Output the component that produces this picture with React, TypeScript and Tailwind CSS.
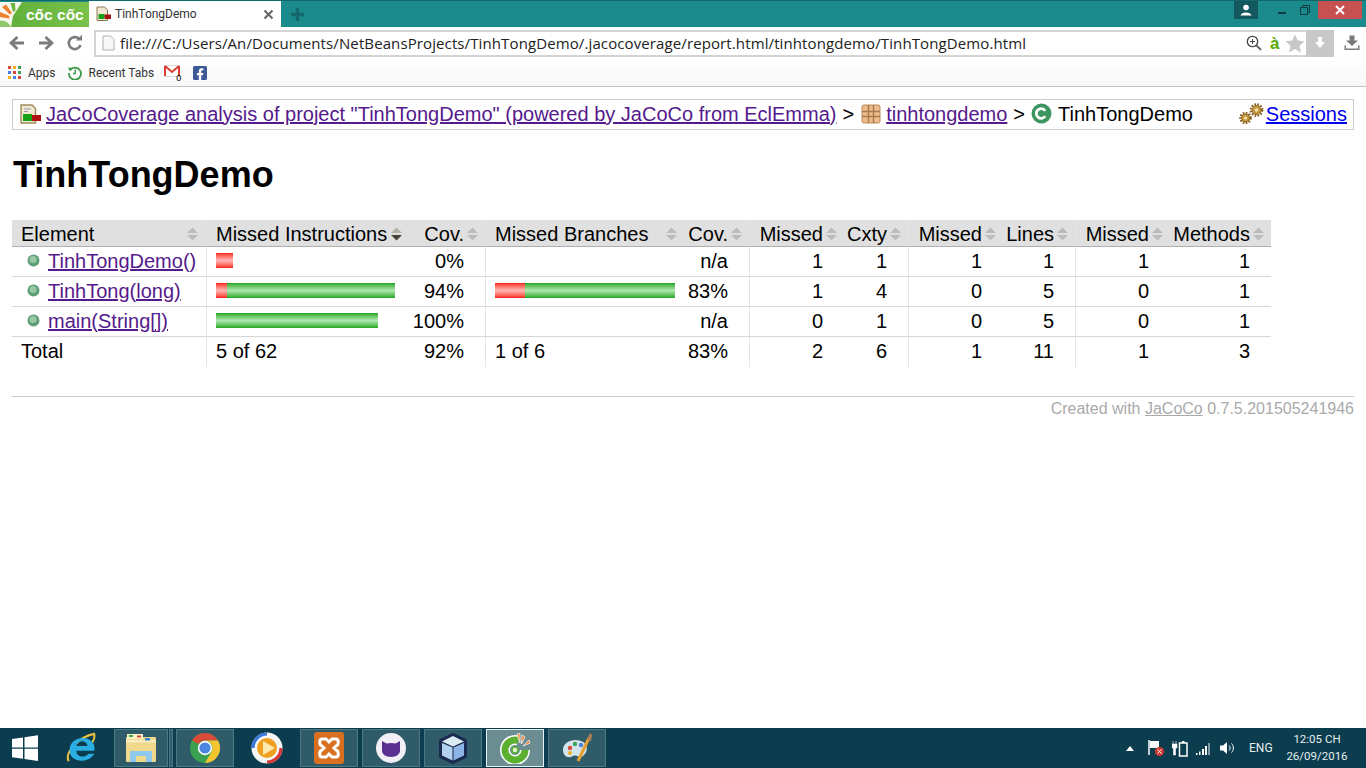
import React from 'react';
import { FaFacebookSquare } from 'react-icons/fa';

const SortIcon = ({ active }: { active?: boolean }) => (
  <svg width="11" height="14" viewBox="0 0 11 14" className="shrink-0">
    <path d="M5.5 0.5 L11 6 H0 Z" fill={active ? '#b5b0a8' : '#bcbcbc'} />
    <path d="M0 8 H11 L5.5 13.5 Z" fill={active ? '#4a4238' : '#bcbcbc'} />
  </svg>
);

const RedBar = ({ w }: { w: number }) => (
  <span className="inline-block h-[15px] bg-linear-to-b from-[#f41c1c] via-[#ffb4b4] to-[#f41414]" style={{ width: w }} />
);

const GreenBar = ({ w }: { w: number }) => (
  <span className="inline-block h-[15px] bg-linear-to-b from-[#18a818] via-[#aee8ae] to-[#18a818]" style={{ width: w }} />
);

const MethodDot = () => (
  <svg width="13" height="13" viewBox="0 0 13 13" className="shrink-0">
    <circle cx="6.5" cy="6.5" r="6" fill="#5f9f78" />
    <circle cx="6" cy="5.5" r="3.5" fill="#98c8a4" />
  </svg>
);

const ReportIcon = () => (
  <svg width="21" height="20" viewBox="0 0 21 20" className="shrink-0">
    <path d="M1 1 H12 L15.5 4.5 V19 H1 Z" fill="#f0e8d0" stroke="#a08a5c" strokeWidth="1.4" />
    <path d="M4 5 H11 M4 7.5 H8" stroke="#9c9cb8" />
    <rect x="3" y="10" width="9" height="7" fill="#18a018" />
    <rect x="12" y="11" width="9" height="6" fill="#b01010" />
  </svg>
);

const PackageIcon = () => (
  <svg width="20" height="20" viewBox="0 0 20 20" className="shrink-0">
    <rect x="1" y="1" width="18" height="18" rx="2" fill="#eebc8a" stroke="#b8885c" />
    <path d="M7.5 1 V19 M12.5 1 V19 M1 7.5 H19 M1 12.5 H19" stroke="#a87850" strokeWidth="1.4" />
  </svg>
);

const ClassIcon = () => (
  <svg width="21" height="21" viewBox="0 0 20 20" className="shrink-0">
    <circle cx="10" cy="10" r="9.5" fill="#3f9560" />
    <path d="M13.5 7.5 A4.6 4.6 0 1 0 13.5 12.5" fill="none" stroke="#fff" strokeWidth="2.6" />
  </svg>
);

const Gear = ({ x, y, r }: { x: number; y: number; r: number }) => (
  <g>
    <circle cx={x} cy={y} r={r} fill="none" stroke="#8c6020" strokeWidth={r * 0.5} strokeDasharray="1.6 1.3" />
    <circle cx={x} cy={y} r={r * 0.8} fill="#c89a40" stroke="#7e5818" strokeWidth="0.8" />
    <circle cx={x} cy={y} r={r * 0.32} fill="#f0e0b0" />
  </g>
);

const SessionsIcon = () => (
  <svg width="25" height="22" viewBox="0 0 25 22" className="shrink-0 mr-[2px]">
    <Gear x={6.5} y={15} r={5} />
    <Gear x={17.5} y={7} r={5.5} />
  </svg>
);

const AppsIcon = () => {
  const colors = ['#d84a38', '#f0b020', '#3aa655', '#4a80d8', '#d84a38', '#3aa655', '#f0b020', '#4a80d8', '#d84a38'];
  return (
    <div className="grid grid-cols-3 gap-[2px] w-[13px] shrink-0">
      {colors.map((c, i) => (
        <span key={i} className="block w-[3px] h-[3px]" style={{ backgroundColor: c }} />
      ))}
    </div>
  );
};

const TabDocIcon = () => (
  <svg width="16" height="16" viewBox="0 0 16 16" className="shrink-0">
    <path d="M1 1 H8.5 L11.5 4 V14.5 H1 Z" fill="#f0e8d0" stroke="#8c7450" />
    <rect x="2.5" y="8" width="6" height="5" fill="#18a018" />
    <rect x="8.5" y="8.5" width="6.5" height="4.5" fill="#a01010" />
  </svg>
);

const CocCocMark = () => (
  <svg width="24" height="25" viewBox="0 0 24 25" className="shrink-0">
    <path d="M0 0 H22 L13 14 L11 25 H0 Z" fill="#f8f8ee" />
    <path d="M0 25 V19 C5 18 9 21 11 25 Z" fill="#8fca6a" />
    <path d="M0 15 L9 16.5 L9.5 14 L0 10 Z" fill="#ee7f2d" />
    <path d="M2 5 L10 12.5 L12 11 L6 2.5 Z" fill="#ee7f2d" />
    <path d="M10.5 1 L13 10 L15.5 8.5 L15 1 Z" fill="#6cb33f" />
  </svg>
);

const Arrow = ({ dir }: { dir: 'left' | 'right' }) => (
  <svg width="18" height="18" viewBox="0 0 18 18" className={dir === 'right' ? 'rotate-180' : ''}>
    <path d="M16 9 H4 M9.5 3 L3 9 L9.5 15" fill="none" stroke="#7c7c7c" strokeWidth="2.8" />
  </svg>
);

const ChromeIcon = () => (
  <svg width="30" height="30" viewBox="0 0 30 30">
    <circle cx="15" cy="15" r="15" fill="#3ba150" />
    <path d="M15 0 A15 15 0 0 1 28 7.5 L15 7.5 A7.5 7.5 0 0 0 8.5 11 L2 7.5 A15 15 0 0 1 15 0 Z" fill="#d94a38" />
    <path d="M28 7.5 A15 15 0 0 1 15 30 L21.5 18.7 A7.5 7.5 0 0 0 15 7.5 Z" fill="#f4c430" />
    <circle cx="15" cy="15" r="7.2" fill="#fff" />
    <circle cx="15" cy="15" r="5.6" fill="#4a86e0" />
  </svg>
);

const IEIcon = () => (
  <svg width="32" height="32" viewBox="0 0 32 34">
    <path d="M3 31 C-2 22 14 5 30 2 C31 6 30 8 28 11" fill="none" stroke="#e8c040" strokeWidth="2.2" />
    <path d="M27 20 H11 C11 27 20 28 24 23 H30 C25 33 5 34 4 20 C3 8 18 3 26 9 C30 12 31 16 30 20 Z M11 15 H23 C22 8 12 8 11 15 Z" fill="#2aaee4" fillRule="evenodd" />
  </svg>
);

const ExplorerIcon = () => (
  <svg width="32" height="30" viewBox="0 0 32 30">
    <rect x="1" y="4" width="30" height="25" rx="1" fill="#f0d88c" />
    <rect x="2" y="1" width="16" height="5" fill="#fbf0c4" />
    <rect x="4" y="2" width="4" height="2" fill="#3aa655" />
    <rect x="12" y="2.5" width="4" height="2" fill="#d84a38" />
    <rect x="1" y="7" width="30" height="2.5" fill="#f8ecc0" />
    <rect x="20" y="5" width="5" height="2.5" fill="#3a86c8" />
    <path d="M5 29 V18 H27 V29 H21 V23 H11 V29 Z" fill="#8fcaee" />
  </svg>
);

const MediaIcon = () => (
  <svg width="32" height="32" viewBox="0 0 32 32">
    <circle cx="16" cy="16" r="15.5" fill="#f6f6f6" />
    <path d="M2 16 A14 14 0 0 1 16 2" fill="none" stroke="#3a78d8" strokeWidth="3.2" />
    <path d="M16 30 A14 14 0 0 0 30 16" fill="none" stroke="#d83838" strokeWidth="3.2" />
    <circle cx="16" cy="16" r="10" fill="#f0a020" />
    <path d="M12 9 L24 16 L12 23 Z" fill="#fde8b0" />
  </svg>
);

const XamppIcon = () => (
  <svg width="30" height="32" viewBox="0 0 30 32">
    <rect width="30" height="32" rx="3" fill="#d96f20" />
    <path d="M8 7 H12 L15 10 L18 7 H22 C25 7 25 13 22 14 L20 16 L22 18 C25 19 25 25 22 25 H18 L15 22 L12 25 H8 C5 25 5 19 8 18 L10 16 L8 14 C5 13 5 7 8 7 Z" fill="none" stroke="#fff" strokeWidth="3" />
  </svg>
);

const GithubIcon = () => (
  <svg width="30" height="30" viewBox="0 0 30 30">
    <circle cx="15" cy="15" r="15" fill="#f2f0f6" />
    <path d="M6 8 L10.5 10.5 C13 9.7 17 9.7 19.5 10.5 L24 8 V18 C24 21 20 24 15 24 C10 24 6 21 6 18 Z" fill="#5b2f92" />
  </svg>
);

const NetbeansIcon = () => (
  <svg width="30" height="33" viewBox="0 0 30 33">
    <path d="M15 1 L28 7 Q29 7.5 29 9 V24 Q29 25.5 28 26 L15 32 L2 26 Q1 25.5 1 24 V9 Q1 7.5 2 7 Z" fill="#1a2a50" />
    <path d="M15 4 L26 9.5 L15 14.5 L4 9.5 Z" fill="#dceef2" />
    <path d="M4 11 L14.5 15.5 V28.5 L4 23.5 Z" fill="#b4d2f0" />
    <path d="M26 11 L15.5 15.5 V28.5 L26 23.5 Z" fill="#8cb4e4" />
  </svg>
);

const CocCocIcon = () => (
  <svg width="32" height="32" viewBox="0 0 32 32">
    <path d="M19.4 8.6 A10 10 0 1 0 26 18" fill="none" stroke="#fff" strokeWidth="10" />
    <path d="M19.4 8.6 A10 10 0 1 0 26 18" fill="none" stroke="#5cb030" strokeWidth="7" />
    <path d="M18 2 L21 1.5 L21 11 Z M23 3 L26 5 L22.5 12 Z M30 8 L31 11 L24 14 Z" fill="#ee7f2d" stroke="#fff" strokeWidth="0.7" />
    <circle cx="16" cy="18" r="3" fill="#dff0d0" stroke="#5cb030" strokeWidth="1.6" />
  </svg>
);

const PaintIcon = () => (
  <svg width="32" height="32" viewBox="0 0 32 32">
    <path d="M2 18 C2 10 12 6 20 9 C28 12 27 20 22 24 C18 27 16 22 12 24 C7 27 2 24 2 18 Z" fill="#d4e4ec" />
    <circle cx="9" cy="16" r="2.2" fill="#d84a38" />
    <circle cx="14" cy="12" r="2.2" fill="#3aa655" />
    <circle cx="20" cy="13" r="2.2" fill="#4a80d8" />
    <circle cx="9" cy="21" r="2" fill="#f0b020" />
    <path d="M17 29 L28 6" stroke="#e8a030" strokeWidth="3" />
    <path d="M26 8 L29 1 L31 3 L30 9 Z" fill="#b08050" />
  </svg>
);

const TaskButton = ({ children, active, plain, className }: { children: React.ReactNode; active?: boolean; plain?: boolean; className?: string }) => (
  <div
    className={`flex items-center justify-center h-[38px] border shrink-0 ${className ?? 'w-[58px] mr-1'} ${
      plain
        ? 'border-transparent'
        : active
          ? 'border-[#e8f0f0] bg-[#6b8d92]'
          : 'border-[#4b7a84] bg-[#2f5c68]'
    }`}
  >
    {children}
  </div>
);

const headerCell = 'p-0 pt-[1px] font-normal h-[27px] bg-[#e0e0e0] border-b border-b-[#b0b0b0]';
const rowCell = 'p-0 pb-[2px] h-[30px] border-b border-b-[#d7d7d7] text-right';
const sep = 'border-r border-r-[#e4e4e4]';

const HeaderLeft = ({ label, active, pad, end }: { label: string; active?: boolean; pad: string; end: string }) => (
  <div className={`flex items-center justify-between ${pad} ${end}`}>
    <span>{label}</span>
    <SortIcon active={active} />
  </div>
);

const HeaderRight = ({ label }: { label: string }) => (
  <div className="flex items-center justify-end">
    <span>{label}</span>
    <span className="w-[21px] flex pl-[3px]">
      <SortIcon />
    </span>
  </div>
);

const NumCell = ({ v, border, total }: { v: string; border?: boolean; total?: boolean }) => (
  <td className={`${total ? 'p-0 pb-[2px] h-[30px] text-right' : rowCell} pr-[21px] ${border ? sep : ''}`}>{v}</td>
);

interface Row {
  name: string;
  instRed: number;
  instGreen: number;
  instCov: string;
  brRed: number;
  brGreen: number;
  brCov: string;
  nums: string[];
}

const rows: Row[] = [
  { name: 'TinhTongDemo()', instRed: 17, instGreen: 0, instCov: '0%', brRed: 0, brGreen: 0, brCov: 'n/a', nums: ['1', '1', '1', '1', '1', '1'] },
  { name: 'TinhTong(long)', instRed: 11, instGreen: 168, instCov: '94%', brRed: 30, brGreen: 150, brCov: '83%', nums: ['1', '4', '0', '5', '0', '1'] },
  { name: 'main(String[])', instRed: 0, instGreen: 162, instCov: '100%', brRed: 0, brGreen: 0, brCov: 'n/a', nums: ['0', '1', '0', '5', '0', '1'] },
];

export default function App() {
  return (
    <div className="h-[768px] w-[1366px] overflow-hidden flex flex-col bg-white text-black font-['Liberation_Sans',Arial,sans-serif]">
      {/* window title + tabs */}
      <div className="h-[27px] shrink-0 bg-[#1b8a8d] flex items-end border-t border-[#12696b]">
        <div className="w-[89px] h-[25px] bg-linear-to-r from-[#5fae3a] to-[#79c24a] flex items-center overflow-hidden">
          <CocCocMark />
          <span className="ml-[2px] text-white font-bold text-[15.5px] whitespace-nowrap">cốc cốc</span>
        </div>
        <div className="w-[192px] h-[26px] bg-white flex items-center pl-[7px] pr-[7px]">
          <TabDocIcon />
          <span className="ml-[3px] text-[12px] text-[#333] flex-1 font-['Roboto',sans-serif]">TinhTongDemo</span>
          <svg width="11" height="11" viewBox="0 0 11 11">
            <path d="M1.5 1.5 L9.5 9.5 M9.5 1.5 L1.5 9.5" stroke="#666" strokeWidth="2" />
          </svg>
        </div>
        <div className="ml-[9px] h-[26px] flex items-center">
          <svg width="15" height="15" viewBox="0 0 15 15">
            <path d="M7.5 1 V14 M1 7.5 H14" stroke="#13686c" strokeWidth="3.4" />
          </svg>
        </div>
        <div className="flex-1" />
        <div className="self-start flex items-start pr-[4px]">
          <div className="w-[24px] h-[18px] bg-[#14585f] flex items-center justify-center">
            <svg width="12" height="12" viewBox="0 0 12 12">
              <circle cx="6" cy="3.5" r="2.8" fill="#fff" />
              <path d="M0.5 11.5 C1 7.5 11 7.5 11.5 11.5 Z" fill="#fff" />
            </svg>
          </div>
          <div className="w-[60px] h-[18px] flex items-center justify-center gap-[14px] pl-[12px]">
            <span className="block w-[8px] h-[2px] bg-[#0e3a40] mt-[5px]" />
            <svg width="10" height="10" viewBox="0 0 10 10">
              <path d="M2.5 2.5 V0.5 H9.5 V7.5 H7.5 M0.5 2.5 H7.5 V9.5 H0.5 Z" fill="none" stroke="#0e3a40" />
            </svg>
          </div>
          <div className="w-[44px] h-[18px] bg-[#c75050] flex items-center justify-center">
            <svg width="10" height="10" viewBox="0 0 10 10">
              <path d="M1 1 L9 9 M9 1 L1 9" stroke="#fff" strokeWidth="2" />
            </svg>
          </div>
        </div>
      </div>

      {/* address bar */}
      <div className="h-[32px] shrink-0 bg-white flex items-center">
        <div className="w-[94px] flex items-center pl-[8px] gap-[11px] shrink-0">
          <Arrow dir="left" />
          <Arrow dir="right" />
          <svg width="18" height="18" viewBox="0 0 18 18">
            <path d="M14.5 11 A6 6 0 1 1 13 4.8" fill="none" stroke="#7c7c7c" strokeWidth="2.6" />
            <path d="M10 6.5 H16 V0.8 Z" fill="#7c7c7c" />
          </svg>
        </div>
        <div className="w-[1240px] h-[27px] border-2 border-r-0 border-[#d4d4d4] flex items-center shrink-0">
          <svg width="13" height="16" viewBox="0 0 13 16" className="ml-[6px] shrink-0">
            <path d="M1 1 H8.5 L12 4.5 V15 H1 Z" fill="#f8f8f8" stroke="#b0b0b0" />
          </svg>
          <span className="ml-[5px] flex-1 text-[15px] text-[#222] whitespace-nowrap font-['Open_Sans',sans-serif] tracking-[0.11px]">
            file:///C:/Users/An/Documents/NetBeansProjects/TinhTongDemo/.jacocoverage/report.html/tinhtongdemo/TinhTongDemo.html
          </span>
          <svg width="16" height="16" viewBox="0 0 16 16" className="shrink-0">
            <circle cx="6.5" cy="6.5" r="5.2" fill="none" stroke="#444" strokeWidth="1.3" />
            <path d="M4 6.5 H9 M6.5 4 V9" stroke="#444" />
            <path d="M10.5 10.5 L15 15" stroke="#666" strokeWidth="2" />
          </svg>
          <span className="ml-[8px] w-[12px] text-[17px] leading-none font-bold text-[#5aa800]">à</span>
          <svg width="20" height="19" viewBox="0 0 20 19" className="ml-[3px] shrink-0">
            <path d="M10 0.5 L12.8 6.6 L19.5 7.3 L14.5 11.8 L15.9 18.5 L10 15.1 L4.1 18.5 L5.5 11.8 L0.5 7.3 L7.2 6.6 Z" fill="#c8c8c8" />
          </svg>
          <div className="ml-[1px] w-[28px] h-[27px] bg-[#c8c8c8] flex items-center justify-center shrink-0">
            <svg width="10" height="12" viewBox="0 0 10 12">
              <path d="M3 0 H7 V5 H10 L5 11 L0 5 H3 Z" fill="#fff" />
            </svg>
          </div>
        </div>
        <div className="flex-1 flex justify-center pl-[4px]">
          <svg width="16" height="16" viewBox="0 0 16 16">
            <path d="M5.5 0.5 H10.5 V5.5 H14 L8 11 L2 5.5 H5.5 Z" fill="#7c7c7c" />
            <path d="M0.5 10.5 V15 H15.5 V10.5 H14 V13.5 H2 V10.5 Z" fill="#7c7c7c" />
          </svg>
        </div>
      </div>

      {/* bookmarks */}
      <div className="h-[28px] shrink-0 bg-linear-to-b from-white to-[#f7f7f7] border-b border-[#c4c4c4] flex items-center text-[12px] text-[#333] font-['Roboto',sans-serif]">
        <div className="pl-[8px]">
          <AppsIcon />
        </div>
        <span className="ml-[7px]">Apps</span>
        <svg width="14" height="14" viewBox="0 0 14 14" className="ml-[12px] shrink-0">
          <path d="M2.2 4 A6 6 0 1 1 1 7" fill="none" stroke="#3a9a48" strokeWidth="1.8" />
          <path d="M0 1.5 L4.5 2 L2 5.5 Z" fill="#3a9a48" />
          <path d="M7.2 3.5 V7.5 H5" fill="none" stroke="#3a9a48" strokeWidth="1.4" />
        </svg>
        <span className="ml-[7px]">Recent Tabs</span>
        <div className="ml-[10px] relative w-[17px] h-[15px] shrink-0">
          <svg width="16" height="12" viewBox="0 0 16 12">
            <rect x="0.5" y="0.5" width="15" height="11" fill="#fff" stroke="#d8d8d8" />
            <path d="M1 1 V11 M15 1 V11 M1 1 L8 7 L15 1" fill="none" stroke="#d84034" strokeWidth="2" />
          </svg>
          <span className="absolute right-0 bottom-[-3px] text-[9px] leading-none text-black font-['Liberation_Sans']">0</span>
        </div>
        <FaFacebookSquare size={16} color="#3b5998" className="ml-[11px] shrink-0" />
      </div>

      {/* report page */}
      <div className="flex-1 px-3 pt-3 text-[20px] leading-none">
        <div className="h-[31px] border border-[#cccccc] flex items-center pl-[7px] pr-[6px] pb-[2px] whitespace-nowrap">
          <ReportIcon />
          <a href="#" className="ml-[5px] text-[#551a8b] underline">
            JaCoCoverage analysis of project "TinhTongDemo" (powered by JaCoCo from EclEmma)
          </a>
          <span className="ml-[6px]">&gt;</span>
          <span className="ml-[7px]">
            <PackageIcon />
          </span>
          <a href="#" className="ml-[5px] text-[#551a8b] underline">
            tinhtongdemo
          </a>
          <span className="ml-[6px]">&gt;</span>
          <span className="ml-[6px]">
            <ClassIcon />
          </span>
          <span className="ml-[6px]">TinhTongDemo</span>
          <div className="flex-1" />
          <SessionsIcon />
          <a href="#" className="text-[#0000ee] underline">
            Sessions
          </a>
        </div>

        <h1 className="mt-[24px] ml-[1px] h-[42px] text-[36px] leading-[42px] font-bold">TinhTongDemo</h1>

        <table className="mt-[24px] w-[1259px] table-fixed border-separate border-spacing-0">
          <colgroup>
            <col className="w-[195px]" />
            <col className="w-[201px]" />
            <col className="w-[78px]" />
            <col className="w-[194px]" />
            <col className="w-[70px]" />
            <col className="w-[94px]" />
            <col className="w-[65px]" />
            <col className="w-[94px]" />
            <col className="w-[73px]" />
            <col className="w-[94px]" />
            <col className="w-[101px]" />
          </colgroup>
          <thead>
            <tr>
              <th className={`${headerCell} ${sep}`}><HeaderLeft label="Element" pad="pl-[9px]" end="pr-[8px]" /></th>
              <th className={headerCell}><HeaderLeft label="Missed Instructions" active pad="pl-[9px]" end="pr-[6px]" /></th>
              <th className={`${headerCell} ${sep}`}><HeaderRight label="Cov." /></th>
              <th className={headerCell}><HeaderLeft label="Missed Branches" pad="pl-[9px]" end="pr-[3px]" /></th>
              <th className={`${headerCell} ${sep}`}><HeaderRight label="Cov." /></th>
              <th className={headerCell}><HeaderRight label="Missed" /></th>
              <th className={`${headerCell} ${sep}`}><HeaderRight label="Cxty" /></th>
              <th className={headerCell}><HeaderRight label="Missed" /></th>
              <th className={`${headerCell} ${sep}`}><HeaderRight label="Lines" /></th>
              <th className={headerCell}><HeaderRight label="Missed" /></th>
              <th className={headerCell}><HeaderRight label="Methods" /></th>
            </tr>
          </thead>
          <tbody>
            {rows.map(r => (
              <tr key={r.name}>
                <td className={`${rowCell} ${sep}`}>
                  <div className="flex items-center pl-[15px] gap-[8px]">
                    <MethodDot />
                    <a href="#" className="text-[#551a8b] underline">{r.name}</a>
                  </div>
                </td>
                <td className={rowCell}>
                  <div className="flex pl-[9px] -mt-[1px]">
                    {r.instRed > 0 && <RedBar w={r.instRed} />}
                    {r.instGreen > 0 && <GreenBar w={r.instGreen} />}
                  </div>
                </td>
                <NumCell v={r.instCov} border />
                <td className={rowCell}>
                  <div className="flex pl-[9px] -mt-[1px]">
                    {r.brRed > 0 && <RedBar w={r.brRed} />}
                    {r.brGreen > 0 && <GreenBar w={r.brGreen} />}
                  </div>
                </td>
                <NumCell v={r.brCov} border />
                <NumCell v={r.nums[0]} />
                <NumCell v={r.nums[1]} border />
                <NumCell v={r.nums[2]} />
                <NumCell v={r.nums[3]} border />
                <NumCell v={r.nums[4]} />
                <NumCell v={r.nums[5]} />
              </tr>
            ))}
            <tr>
              <td className={`p-0 pb-[2px] h-[30px] pl-[9px] ${sep}`}>Total</td>
              <td className="p-0 pb-[2px] h-[30px] pl-[9px]">5 of 62</td>
              <NumCell v="92%" border total />
              <td className="p-0 pb-[2px] h-[30px] pl-[9px]">1 of 6</td>
              <NumCell v="83%" border total />
              <NumCell v="2" total />
              <NumCell v="6" border total />
              <NumCell v="1" total />
              <NumCell v="11" border total />
              <NumCell v="1" total />
              <NumCell v="3" total />
            </tr>
          </tbody>
        </table>

        <div className="mt-[29px] border-t border-[#cccccc] pt-[3px] text-right text-[16px] leading-[18px] text-[#aaaaaa]">
          Created with <a href="#" className="underline">JaCoCo</a> 0.7.5.201505241946
        </div>
      </div>

      {/* windows taskbar */}
      <div className="h-[40px] shrink-0 bg-[#0b3d4e] flex items-center text-white">
        <div className="w-[62px] flex justify-center pr-[12px] shrink-0">
          <svg width="26" height="26" viewBox="0 0 26 26">
            <path d="M0 4 L11 2.4 V12.4 H0 Z M12.5 2.2 L26 0.2 V12.4 H12.5 Z M0 13.8 H11 V23.8 L0 22.2 Z M12.5 13.8 H26 V26 L12.5 24 Z" fill="#fff" />
          </svg>
        </div>
        <TaskButton plain className="w-[38px] mr-[14px]"><IEIcon /></TaskButton>
        <TaskButton className="w-[54px]"><ExplorerIcon /></TaskButton>
        <div className="w-[4px] h-[38px] bg-[#2f5c68] border border-[#4b7a84] ml-[1px] mr-[3px]" />
        <TaskButton><ChromeIcon /></TaskButton>
        <TaskButton plain><MediaIcon /></TaskButton>
        <TaskButton><XamppIcon /></TaskButton>
        <TaskButton><GithubIcon /></TaskButton>
        <TaskButton><NetbeansIcon /></TaskButton>
        <TaskButton active><CocCocIcon /></TaskButton>
        <TaskButton><PaintIcon /></TaskButton>
        <div className="flex-1" />
        <div className="flex items-center font-['Roboto',sans-serif] text-[12px] text-[#e6eef0]">
          <svg width="8" height="5" viewBox="0 0 8 5">
            <path d="M4 0 L8 5 H0 Z" fill="#fff" />
          </svg>
          <svg width="18" height="18" viewBox="0 0 18 18" className="ml-[13px]">
            <path d="M2 1 V16" stroke="#fff" strokeWidth="1.5" />
            <path d="M3 2 H12 V9 H3 Z" fill="#fff" />
            <circle cx="12.5" cy="12.5" r="4.5" fill="#d03a30" />
            <path d="M10.5 10.5 L14.5 14.5 M14.5 10.5 L10.5 14.5" stroke="#fff" />
          </svg>
          <svg width="16" height="17" viewBox="0 0 16 17" className="ml-[7px]">
            <path d="M1 1 V4 M4 1 V4 M0 4 H5 V8 H3.5 V15 H1.5 V8 H0 Z" fill="#fff" stroke="#fff" strokeWidth="0.6" />
            <rect x="7.5" y="3" width="7.5" height="13" fill="none" stroke="#fff" strokeWidth="1.5" />
            <rect x="10" y="1" width="2.5" height="2" fill="#fff" />
          </svg>
          <svg width="15" height="13" viewBox="0 0 15 13" className="ml-[7px]">
            <path d="M1 11 H2.5 V13 H1 Z M4 9.5 H5.5 V13 H4 Z M7 7 H9 V13 H7 Z M10 4 H12 V13 H10 Z" fill="#fff" />
            <path d="M13 1 H15 V13 H13 Z" fill="#7f9aa4" />
          </svg>
          <svg width="16" height="14" viewBox="0 0 16 14" className="ml-[10px]">
            <path d="M0 4.5 H3 L7 1 V13 L3 9.5 H0 Z" fill="#fff" />
            <path d="M9 4.5 C10.5 6 10.5 8 9 9.5 M11.5 2.5 C14 5 14 9 11.5 11.5" fill="none" stroke="#fff" />
          </svg>
          <span className="ml-[13px] w-[24px]">ENG</span>
          <div className="ml-[13px] w-[62px] text-center leading-[17px] text-[11.5px]">
            <div>12:05 CH</div>
            <div>26/09/2016</div>
          </div>
          <div className="w-[18px]" />
        </div>
      </div>
    </div>
  );
}
